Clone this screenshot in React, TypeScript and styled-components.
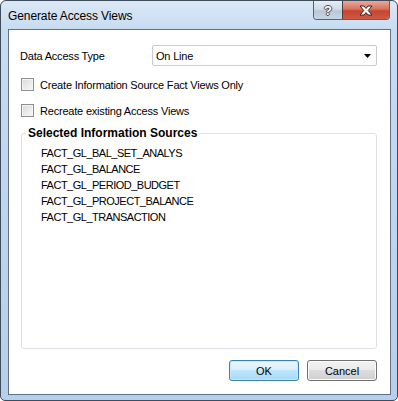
import React from 'react';
import styled, { createGlobalStyle } from 'styled-components';

const GlobalStyle = createGlobalStyle`
  html, body {
    margin: 0;
    padding: 0;
    background: #ffffff;
  }
  body {
    font-family: "Liberation Sans", Arial, sans-serif;
  }
`;

const Window = styled.div`
  width: 398px;
  height: 401px;
  box-sizing: border-box;
  border: 1px solid #3e4c5c;
  border-radius: 6px 6px 5px 5px;
  background: linear-gradient(to bottom, #dbe8f6 0px, #c8dcf1 28px, #bcd4ee 60%, #b6cfea 100%);
  display: flex;
  flex-direction: column;
  overflow: hidden;
`;

const TitleBar = styled.div`
  height: 28px;
  display: flex;
  align-items: flex-start;
  justify-content: space-between;
  padding-left: 7px;
  padding-right: 7px;
`;

const Title = styled.div`
  font-size: 12px;
  color: #000;
  margin-top: 8px;
  letter-spacing: -0.1px;
`;

const CaptionButtons = styled.div`
  display: flex;
  border: 1px solid #4f6478;
  border-top: none;
  border-radius: 0 0 4px 4px;
  overflow: hidden;
  height: 18px;
`;

const CaptionButton = styled.div<{ $close?: boolean }>`
  width: ${p => (p.$close ? 46 : 28)}px;
  height: 18px;
  display: flex;
  align-items: center;
  justify-content: center;
  border-left: ${p => (p.$close ? '1px solid #5a3a36' : 'none')};
  background: ${p =>
    p.$close
      ? 'linear-gradient(to bottom, #e9a99a 0%, #d8725f 45%, #c7452f 55%, #d05a45 100%)'
      : 'linear-gradient(to bottom, #e6eef6 0%, #cfdbe8 45%, #b9c8d8 55%, #c7d5e3 100%)'};
`;

const HelpGlyph = styled.span`
  font-family: "Liberation Sans", Arial, sans-serif;
  font-weight: bold;
  font-size: 13px;
  line-height: 1;
  color: #ffffff;
  text-shadow: -1px 0 #3d4b5c, 1px 0 #3d4b5c, 0 -1px #3d4b5c, 0 1px #3d4b5c;
`;

const Client = styled.div`
  flex: 1;
  margin: 0 6px 5px 7px;
  border: 1px solid #5f7186;
  background: #ffffff;
  display: flex;
  flex-direction: column;
  padding: 15px 13px 13px 12px;
  font-size: 11px;
  letter-spacing: -0.2px;
  color: #000;
`;

const FieldRow = styled.div`
  display: flex;
  align-items: center;
  height: 21px;
`;

const Label = styled.div`
  width: 132px;
  margin-left: -1px;
`;

const Select = styled.div`
  flex: 1;
  height: 21px;
  box-sizing: border-box;
  border: 1px solid #c9cbd0;
  border-radius: 2px;
  display: flex;
  align-items: center;
  justify-content: space-between;
  padding: 0 4px 0 3px;
`;

const CheckRow = styled.div<{ $top: number }>`
  display: flex;
  align-items: center;
  gap: 6px;
  margin-top: ${p => p.$top}px;
  height: 13px;
`;

const CheckBox = styled.div`
  width: 13px;
  height: 13px;
  box-sizing: border-box;
  border: 1px solid #8e8f8f;
  background: linear-gradient(135deg, #d8d8d8 0%, #ececec 60%, #f6f6f6 100%);
  box-shadow: inset 0 0 0 1px #f4f4f4;
`;

const Group = styled.fieldset`
  margin: 10px 0 0 0;
  padding: 5px 0 0 19px;
  border: 1px solid #dde1e6;
  border-radius: 3px;
  height: 222px;
  box-sizing: border-box;
  min-width: 0;
`;

const Legend = styled.legend`
  font-weight: bold;
  font-size: 12px;
  letter-spacing: 0;
  padding: 0 2px;
  margin-left: -15px;
  line-height: 13px;
`;

const Item = styled.div`
  line-height: 16px;
  height: 16px;
  letter-spacing: -0.5px;
`;

const ButtonBar = styled.div`
  display: flex;
  justify-content: flex-end;
  gap: 8px;
  margin-top: 11px;
`;

const Button = styled.div<{ $default?: boolean }>`
  width: 70px;
  height: 21px;
  box-sizing: border-box;
  border: 1px solid ${p => (p.$default ? '#3c7fb1' : '#707070')};
  border-radius: 3px;
  display: flex;
  align-items: center;
  justify-content: center;
  letter-spacing: 0;
  background: ${p =>
    p.$default
      ? 'linear-gradient(to bottom, #eaf6fd 0%, #d9f0fc 45%, #bee6fd 50%, #a7d9f5 100%)'
      : 'linear-gradient(to bottom, #f2f2f2 0%, #ebebeb 45%, #dddddd 50%, #cfcfcf 100%)'};
  box-shadow: inset 0 0 0 1px ${p => (p.$default ? '#c8e9fb' : '#fbfbfb')};
`;

const sources = [
  'FACT_GL_BAL_SET_ANALYS',
  'FACT_GL_BALANCE',
  'FACT_GL_PERIOD_BUDGET',
  'FACT_GL_PROJECT_BALANCE',
  'FACT_GL_TRANSACTION',
];

function App() {
  return (
    <>
      <GlobalStyle />
      <Window>
        <TitleBar>
          <Title>Generate Access Views</Title>
          <CaptionButtons>
            <CaptionButton>
              <HelpGlyph>?</HelpGlyph>
            </CaptionButton>
            <CaptionButton $close>
              <svg width="14" height="11" viewBox="0 0 14 11">
                <path
                  d="M1 1 H5 L7 3.5 L9 1 H13 L9.2 5.5 L13 10 H9 L7 7.5 L5 10 H1 L4.8 5.5 Z"
                  fill="#ffffff"
                  stroke="#3b2420"
                  strokeWidth="1"
                  strokeLinejoin="round"
                />
              </svg>
            </CaptionButton>
          </CaptionButtons>
        </TitleBar>
        <Client>
          <FieldRow>
            <Label>Data Access Type</Label>
            <Select>
              <span>On Line</span>
              <svg width="8" height="4" viewBox="0 0 8 4">
                <path d="M0 0 H7 L3.5 4 Z" fill="#000" />
              </svg>
            </Select>
          </FieldRow>
          <CheckRow $top={12}>
            <CheckBox />
            <span>Create Information Source Fact Views Only</span>
          </CheckRow>
          <CheckRow $top={13}>
            <CheckBox />
            <span>Recreate existing Access Views</span>
          </CheckRow>
          <Group>
            <Legend>Selected Information Sources</Legend>
            {sources.map(s => (
              <Item key={s}>{s}</Item>
            ))}
          </Group>
          <ButtonBar>
            <Button $default>OK</Button>
            <Button>Cancel</Button>
          </ButtonBar>
        </Client>
      </Window>
    </>
  );
}

export default App;
